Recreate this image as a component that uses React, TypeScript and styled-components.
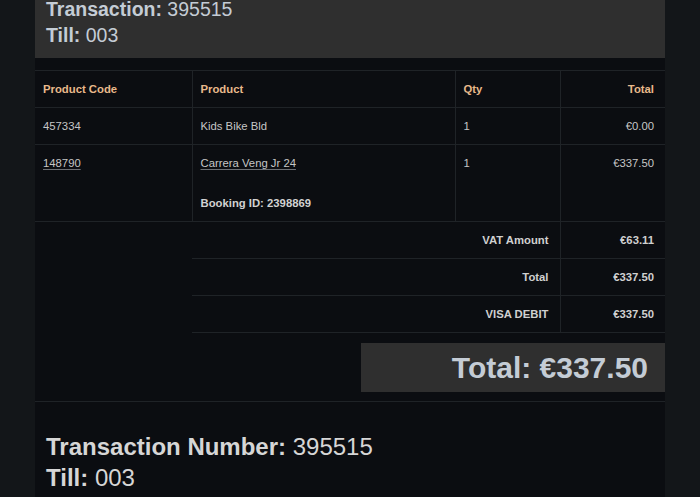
import React from 'react';
import styled, { createGlobalStyle } from 'styled-components';

const GlobalStyle = createGlobalStyle`
  body {
    margin: 0;
    background: #131619;
    font-family: "Liberation Sans", Arial, sans-serif;
  }
`;

const Receipt = styled.div`
  width: 630px;
  margin: 0 auto;
  background: #0b0d11;
  min-height: 520px;
`;

const Header = styled.div`
  background: #2f2f2f;
  padding: 0 11px 10px;
  margin-bottom: 12px;
`;

const InfoLine = styled.div<{ $size: number; $lh: number; $color?: string }>`
  font-size: ${p => p.$size}px;
  line-height: ${p => p.$lh}px;
  color: ${p => p.$color || '#c4ccd5'};
  &:first-child { margin-top: -4px; }
  b { font-weight: 700; }
`;

const Table = styled.table`
  width: 100%;
  border-collapse: collapse;
  table-layout: fixed;
  font-size: 11.3px;
  line-height: 16px;
  color: #c6c6c6;
`;

const Th = styled.th<{ $right?: boolean }>`
  text-align: ${p => (p.$right ? 'right' : 'left')};
  color: #e8b98b;
  font-weight: 700;
  padding: 10px 11px 10px 8px;
  border-top: 1px solid #1f2327;
  border-bottom: 1px solid #1f2327;
  border-right: 1px solid #1f2327;
  &:last-child { border-right: none; }
`;

const Td = styled.td<{ $right?: boolean }>`
  text-align: ${p => (p.$right ? 'right' : 'left')};
  vertical-align: top;
  padding: 10px 11px 10px 8px;
  border-bottom: 1px solid #1f2327;
  border-right: 1px solid #1f2327;
  &:last-child { border-right: none; }
`;

const Linked = styled.span`
  text-decoration: underline;
  text-decoration-color: #6d7075;
  text-underline-offset: 2px;
`;

const Booking = styled.div`
  margin-top: 24px;
  font-weight: 700;
  color: #d2d2d2;
`;

const Blank = styled.td`
  border: none;
`;

const SumCell = styled.td`
  text-align: right;
  font-weight: 700;
  color: #d0d0d0;
  padding: 10px 11px 10px 8px;
  border-bottom: 1px solid #1f2327;
  border-right: 1px solid #1f2327;
  &:last-child { border-right: none; }
`;

const TotalWrap = styled.div`
  display: flex;
  justify-content: flex-end;
  padding: 10px 0 9px;
  border-bottom: 1px solid #1f2327;
`;

const TotalBox = styled.div`
  width: 304px;
  height: 49px;
  box-sizing: border-box;
  background: #2f2f2f;
  color: #c4ccd5;
  font-size: 30px;
  font-weight: 700;
  line-height: 49px;
  text-align: right;
  padding-right: 17px;
`;

const Footer = styled.div`
  padding: 33px 11px 0;
`;

const rows = [
  { code: '457334', name: 'Kids Bike Bld', qty: '1', total: '€0.00' },
  { code: '148790', name: 'Carrera Veng Jr 24', qty: '1', total: '€337.50', booking: '2398869', link: true },
];

const summary = [
  ['VAT Amount', '€63.11'],
  ['Total', '€337.50'],
  ['VISA DEBIT', '€337.50'],
];

export default function App() {
  return (
    <>
      <GlobalStyle />
      <Receipt>
        <Header>
          <InfoLine $size={19.5} $lh={26}><b>Transaction:</b> 395515</InfoLine>
          <InfoLine $size={19.5} $lh={26}><b>Till:</b> 003</InfoLine>
        </Header>
        <Table>
          <colgroup>
            <col style={{ width: 157 }} />
            <col style={{ width: 263 }} />
            <col style={{ width: 105 }} />
            <col style={{ width: 105 }} />
          </colgroup>
          <thead>
            <tr>
              <Th>Product Code</Th>
              <Th>Product</Th>
              <Th>Qty</Th>
              <Th $right>Total</Th>
            </tr>
          </thead>
          <tbody>
            {rows.map(r => (
              <tr key={r.code}>
                <Td>{r.link ? <Linked>{r.code}</Linked> : r.code}</Td>
                <Td>
                  {r.link ? <Linked>{r.name}</Linked> : r.name}
                  {r.booking && <Booking>Booking ID: {r.booking}</Booking>}
                </Td>
                <Td>{r.qty}</Td>
                <Td $right>{r.total}</Td>
              </tr>
            ))}
            {summary.map(([label, value]) => (
              <tr key={label}>
                <Blank />
                <SumCell colSpan={2}>{label}</SumCell>
                <SumCell>{value}</SumCell>
              </tr>
            ))}
          </tbody>
        </Table>
        <TotalWrap>
          <TotalBox>Total: €337.50</TotalBox>
        </TotalWrap>
        <Footer>
          <InfoLine $size={24} $lh={31} $color="#d6d6d6"><b>Transaction Number:</b> 395515</InfoLine>
          <InfoLine $size={24} $lh={31} $color="#d6d6d6"><b>Till:</b> 003</InfoLine>
        </Footer>
      </Receipt>
    </>
  );
}
